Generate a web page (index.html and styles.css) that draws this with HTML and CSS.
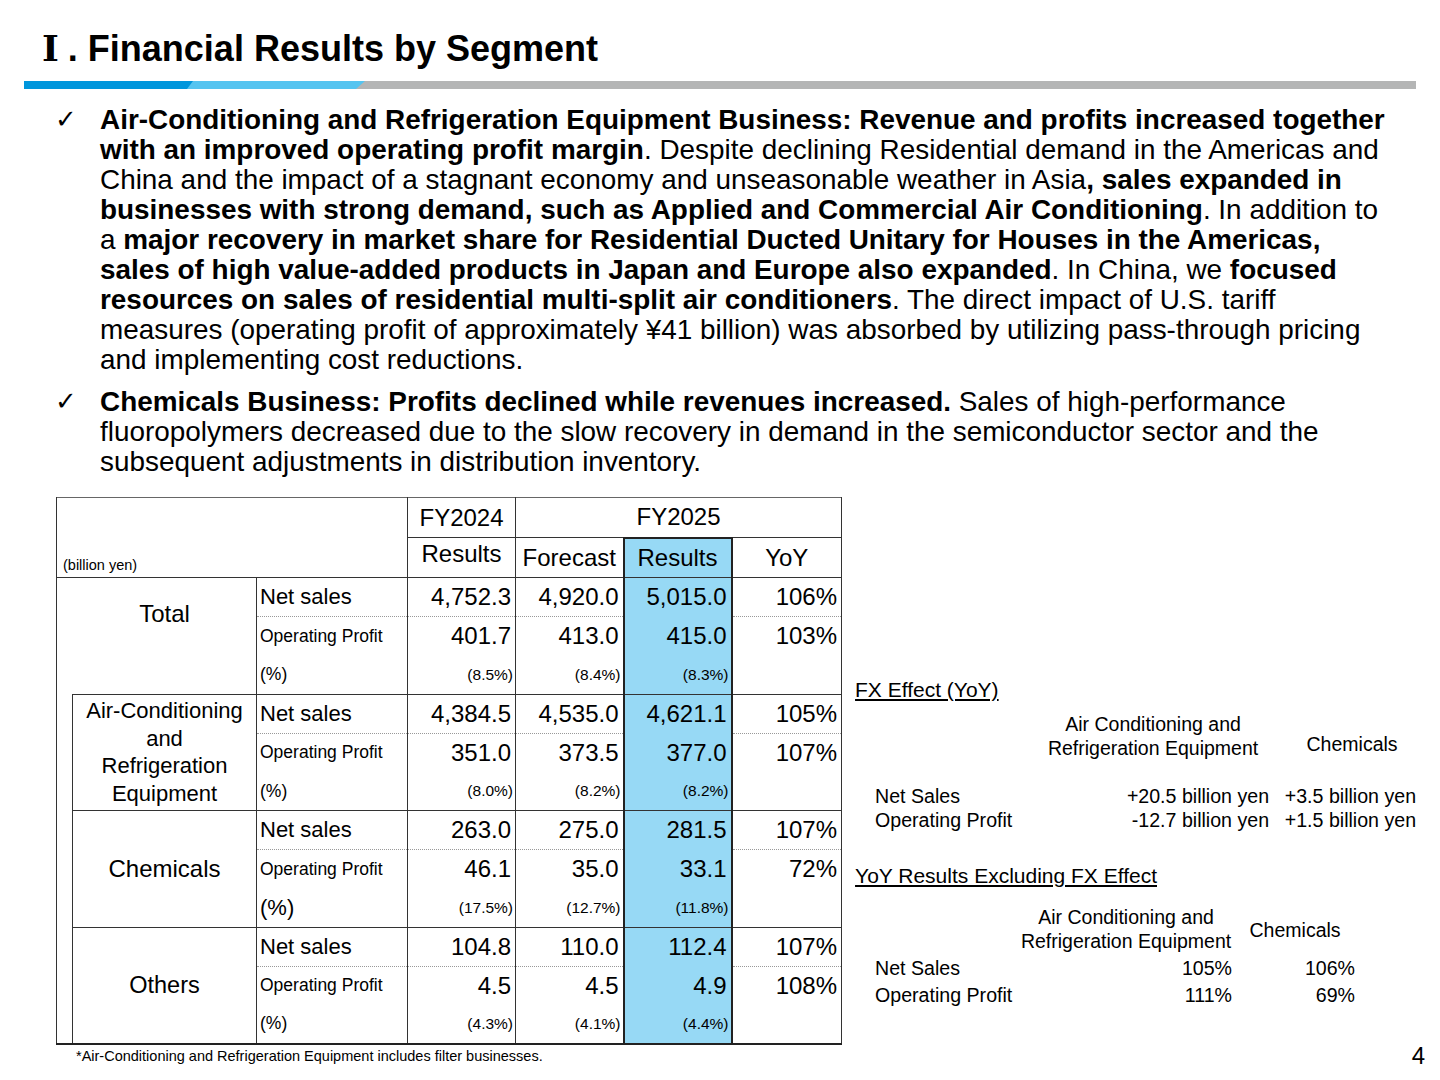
FILE: index.html
```html
<!DOCTYPE html>
<html lang="en">
<head>
    <meta charset="UTF-8">
    <title>Financial Results by Segment</title>
    <link rel="stylesheet" href="styles.css">
</head>
<body>
<div class="page">
    <h1 class="title"><span class="roman">Ⅰ</span>. Financial Results by Segment</h1>
    <div class="rule">
        <svg width="1392" height="8" viewBox="0 0 1392 8">
            <rect width="1392" height="8" fill="#b4b5b5"/>
            <polygon points="0,0 341,0 332,8 0,8" fill="#55c4f0"/>
            <polygon points="0,0 169,0 163,8 0,8" fill="#0096dc"/>
        </svg>
    </div>

    <ul class="points">
        <li><span class="check">✓</span><p><b>Air-Conditioning and Refrigeration Equipment Business: Revenue and profits increased together</b><br>
            <b>with an improved operating profit margin</b>. Despite declining Residential demand in the Americas and<br>
            China and the impact of a stagnant economy and unseasonable weather in Asia<b>, sales expanded in</b><br>
            <b>businesses with strong demand, such as Applied and Commercial Air Conditioning</b>. In addition to<br>
            a <b>major recovery in market share for Residential Ducted Unitary for Houses in the Americas,</b><br>
            <b>sales of high value-added products in Japan and Europe also expanded</b>. In China, we <b>focused</b><br>
            <b>resources on sales of residential multi-split air conditioners</b>. The direct impact of U.S. tariff<br>
            measures (operating profit of approximately ¥41 billion) was absorbed by utilizing pass-through pricing<br>
            and implementing cost reductions.</p></li>
        <li><span class="check">✓</span><p><b>Chemicals Business: Profits declined while revenues increased.</b> Sales of high-performance<br>
            fluoropolymers decreased due to the slow recovery in demand in the semiconductor sector and the<br>
            subsequent adjustments in distribution inventory.</p></li>
    </ul>

    <div class="main">
        <table class="seg">
            <colgroup>
                <col style="width:16px">
                <col style="width:184px">
                <col style="width:151px">
                <col style="width:108px">
                <col style="width:108px">
                <col style="width:108px">
                <col style="width:110px">
            </colgroup>
            <thead>
                <tr class="h1">
                    <th colspan="3" rowspan="2" class="corner"><span class="unit">(billion yen)</span></th>
                    <th>FY2024</th>
                    <th colspan="3">FY2025</th>
                </tr>
                <tr class="h2">
                    <th class="prev">Results</th>
                    <th>Forecast</th>
                    <th class="hl">Results</th>
                    <th>YoY</th>
                </tr>
            </thead>
            <tbody>
                <tr class="r-sales g-start">
                    <th colspan="2" rowspan="3" class="name total">Total</th>
                    <td class="item">Net sales</td>
                    <td class="num">4,752.3</td><td class="num">4,920.0</td><td class="num hl">5,015.0</td><td class="num">106%</td>
                </tr>
                <tr class="r-op">
                    <td class="item sm">Operating Profit</td>
                    <td class="num">401.7</td><td class="num">413.0</td><td class="num hl">415.0</td><td class="num">103%</td>
                </tr>
                <tr class="r-pct">
                    <td class="item sm">(%)</td>
                    <td class="pct">(8.5%)</td><td class="pct">(8.4%)</td><td class="pct hl">(8.3%)</td><td></td>
                </tr>

                <tr class="r-sales g-start">
                    <td rowspan="9" class="indent"></td>
                    <th rowspan="3" class="name acr">Air-Conditioning<br>and<br>Refrigeration<br>Equipment</th>
                    <td class="item">Net sales</td>
                    <td class="num">4,384.5</td><td class="num">4,535.0</td><td class="num hl">4,621.1</td><td class="num">105%</td>
                </tr>
                <tr class="r-op">
                    <td class="item sm">Operating Profit</td>
                    <td class="num">351.0</td><td class="num">373.5</td><td class="num hl">377.0</td><td class="num">107%</td>
                </tr>
                <tr class="r-pct">
                    <td class="item sm">(%)</td>
                    <td class="pct">(8.0%)</td><td class="pct">(8.2%)</td><td class="pct hl">(8.2%)</td><td></td>
                </tr>

                <tr class="r-sales g-start">
                    <th rowspan="3" class="name chem">Chemicals</th>
                    <td class="item">Net sales</td>
                    <td class="num">263.0</td><td class="num">275.0</td><td class="num hl">281.5</td><td class="num">107%</td>
                </tr>
                <tr class="r-op">
                    <td class="item sm">Operating Profit</td>
                    <td class="num">46.1</td><td class="num">35.0</td><td class="num hl">33.1</td><td class="num">72%</td>
                </tr>
                <tr class="r-pct">
                    <td class="item">(%)</td>
                    <td class="pct">(17.5%)</td><td class="pct">(12.7%)</td><td class="pct hl">(11.8%)</td><td></td>
                </tr>

                <tr class="r-sales g-start">
                    <th rowspan="3" class="name">Others</th>
                    <td class="item">Net sales</td>
                    <td class="num">104.8</td><td class="num">110.0</td><td class="num hl">112.4</td><td class="num">107%</td>
                </tr>
                <tr class="r-op">
                    <td class="item sm">Operating Profit</td>
                    <td class="num">4.5</td><td class="num">4.5</td><td class="num hl">4.9</td><td class="num">108%</td>
                </tr>
                <tr class="r-pct">
                    <td class="item sm">(%)</td>
                    <td class="pct">(4.3%)</td><td class="pct">(4.1%)</td><td class="pct hl">(4.4%)</td><td></td>
                </tr>
            </tbody>
        </table>

        <aside class="fx">
            <h3>FX Effect (YoY)</h3>
            <div class="fx-grid fx1">
                <div></div>
                <div class="hd">Air Conditioning and<br>Refrigeration Equipment</div>
                <div class="hd chem-hd">Chemicals</div>
                <div class="lb">Net Sales</div>
                <div class="v">+20.5 billion yen</div>
                <div class="v">+3.5 billion yen</div>
                <div class="lb">Operating Profit</div>
                <div class="v">-12.7 billion yen</div>
                <div class="v">+1.5 billion yen</div>
            </div>

            <h3 class="second">YoY Results Excluding FX Effect</h3>
            <div class="fx-grid fx2">
                <div></div>
                <div class="hd">Air Conditioning and<br>Refrigeration Equipment</div>
                <div class="hd mid">Chemicals</div>
                <div class="lb">Net Sales</div>
                <div class="v">105%</div>
                <div class="v">106%</div>
                <div class="lb">Operating Profit</div>
                <div class="v">111%</div>
                <div class="v">69%</div>
            </div>
        </aside>
    </div>

    <div class="foot">
        <span class="note">*Air-Conditioning and Refrigeration Equipment includes filter businesses.</span>
        <span class="pageno">4</span>
    </div>
</div>
</body>
</html>
```

FILE: styles.css
```css
* {
    box-sizing: border-box;
}

html, body {
    margin: 0;
    padding: 0;
}

body {
    width: 1440px;
    height: 1080px;
    font-family: "Liberation Sans", Arial, sans-serif;
    color: #000;
    background: #fff;
    overflow: hidden;
}

.page {
    padding: 29px 15px 0 24px;
}

/* heading */
.title {
    margin: 0 0 0 18px;
    height: 40px;
    font-size: 36px;
    line-height: 40px;
    font-weight: bold;
}
.title .roman {
    font-family: "DejaVu Serif", "Noto Sans CJK JP", serif;
    line-height: 0;
    margin-right: 9px;
}

.rule {
    margin-top: 12px;
    height: 8px;
    line-height: 0;
}
.rule svg {
    display: block;
}

/* bullet text */
.points {
    list-style: none;
    margin: 16px 0 0 31px;
    padding: 0;
}
.points li {
    display: flex;
    font-size: 27.9px;
    line-height: 30px;
}
.points li + li {
    margin-top: 12px;
}
.points p {
    margin: 0;
    white-space: nowrap;
}
.check {
    flex: 0 0 45px;
    font-family: "DejaVu Sans", sans-serif;
    font-size: 26px;
    line-height: 28px;
}

/* table + side notes */
.main {
    display: flex;
    gap: 13px;
    margin: 20px 0 0 32px;
}

.seg {
    border-collapse: collapse;
    table-layout: fixed;
    width: 786px;
    border-top: 1px solid #666;
    border-left: 1px solid #666;
    border-right: 1px solid #333;
    border-bottom: 2px solid #222;
}
.seg th, .seg td {
    padding: 0;
    font-weight: normal;
    border-left: 1px solid #333;
    border-right: 1px solid #333;
}
.seg thead th {
    height: 40px;
    font-size: 24px;
    text-align: center;
    vertical-align: middle;
}
.seg .h1 th {
    border-bottom: 1px solid #333;
}
.seg .h2 th {
    border-bottom: 1px solid #333;
}
.seg .h2 .prev {
    padding-bottom: 7px;
}
.seg .corner {
    text-align: left;
    vertical-align: bottom;
    padding: 0 0 1px 6px;
    border-bottom: 1px solid #333;
}
.unit {
    font-size: 14.5px;
}

.seg tbody tr {
    height: 39px;
}
.seg tbody tr.r-pct {
    height: 38.5px;
}
.g-start > th, .g-start > td {
    border-top: 1px solid #333;
}
.g-start > td.indent {
    border-top: none;
}
.seg .indent {
    border-bottom: none;
}
.r-sales td {
    border-bottom: 1px dotted #999;
}
.r-sales td.hl {
    border-bottom: none;
}

.seg .name {
    font-size: 23.5px;
    text-align: center;
    vertical-align: middle;
}
.seg .name.total {
    font-size: 24px;
    vertical-align: top;
    padding: 22px 0 0 16px;
    border-bottom: none;
}
.seg .name.acr {
    font-size: 22px;
    line-height: 27.5px;
}
.seg .name.chem {
    font-size: 24px;
}

.item {
    font-size: 22px;
    padding-left: 3px !important;
    white-space: nowrap;
}
.item.sm {
    font-size: 17.5px;
}
.num {
    font-size: 24px;
    text-align: right;
    padding-right: 4px !important;
}
.pct {
    font-size: 15.5px;
    text-align: right;
    padding-right: 2px !important;
}
.seg .hl {
    background: #97d9f5;
    border-left: 2px solid #222;
    border-right: 2px solid #222;
}
.seg thead .hl {
    border-top: 2px solid #222;
}

/* FX notes */
.fx {
    flex: 1;
    margin-top: 181px;
    font-size: 19.6px;
}
.fx h3 {
    margin: 0;
    font-size: 21px;
    font-weight: normal;
    line-height: 24px;
    text-decoration: underline;
    text-underline-offset: 2px;
}
.fx h3.second {
    margin-top: 32px;
}
.fx-grid {
    display: grid;
    line-height: 24px;
}
.fx-grid .lb {
    padding-left: 20px;
}
.fx-grid .hd {
    text-align: center;
    font-size: 19.5px;
}
.fx-grid .v {
    text-align: right;
}

.fx1 {
    margin-top: 10px;
    grid-template-columns: 182px 232px 150px;
    grid-template-rows: 72px 24px 24px;
}
.fx1 .chem-hd {
    padding: 20px 0 0 16px;
}
.fx1 .v:nth-child(3n) {
    padding-right: 3px;
}

.fx2 {
    margin-top: 17px;
    line-height: 27px;
    grid-template-columns: 164px 214px 124px;
    grid-template-rows: 50px 27px 27px;
}
.fx2 .hd {
    line-height: 24px;
}
.fx2 .mid {
    align-self: center;
}
.fx2 .v {
    padding-right: 1px;
}
.fx2 .v:nth-child(3n) {
    padding-right: 2px;
}

/* footer */
.foot {
    display: flex;
    justify-content: space-between;
    align-items: flex-start;
    margin: 3px 0 0 52px;
}
.note {
    font-size: 14.5px;
    line-height: 16px;
}
.pageno {
    font-size: 24px;
    line-height: 24px;
    margin-top: -4px;
}
```
